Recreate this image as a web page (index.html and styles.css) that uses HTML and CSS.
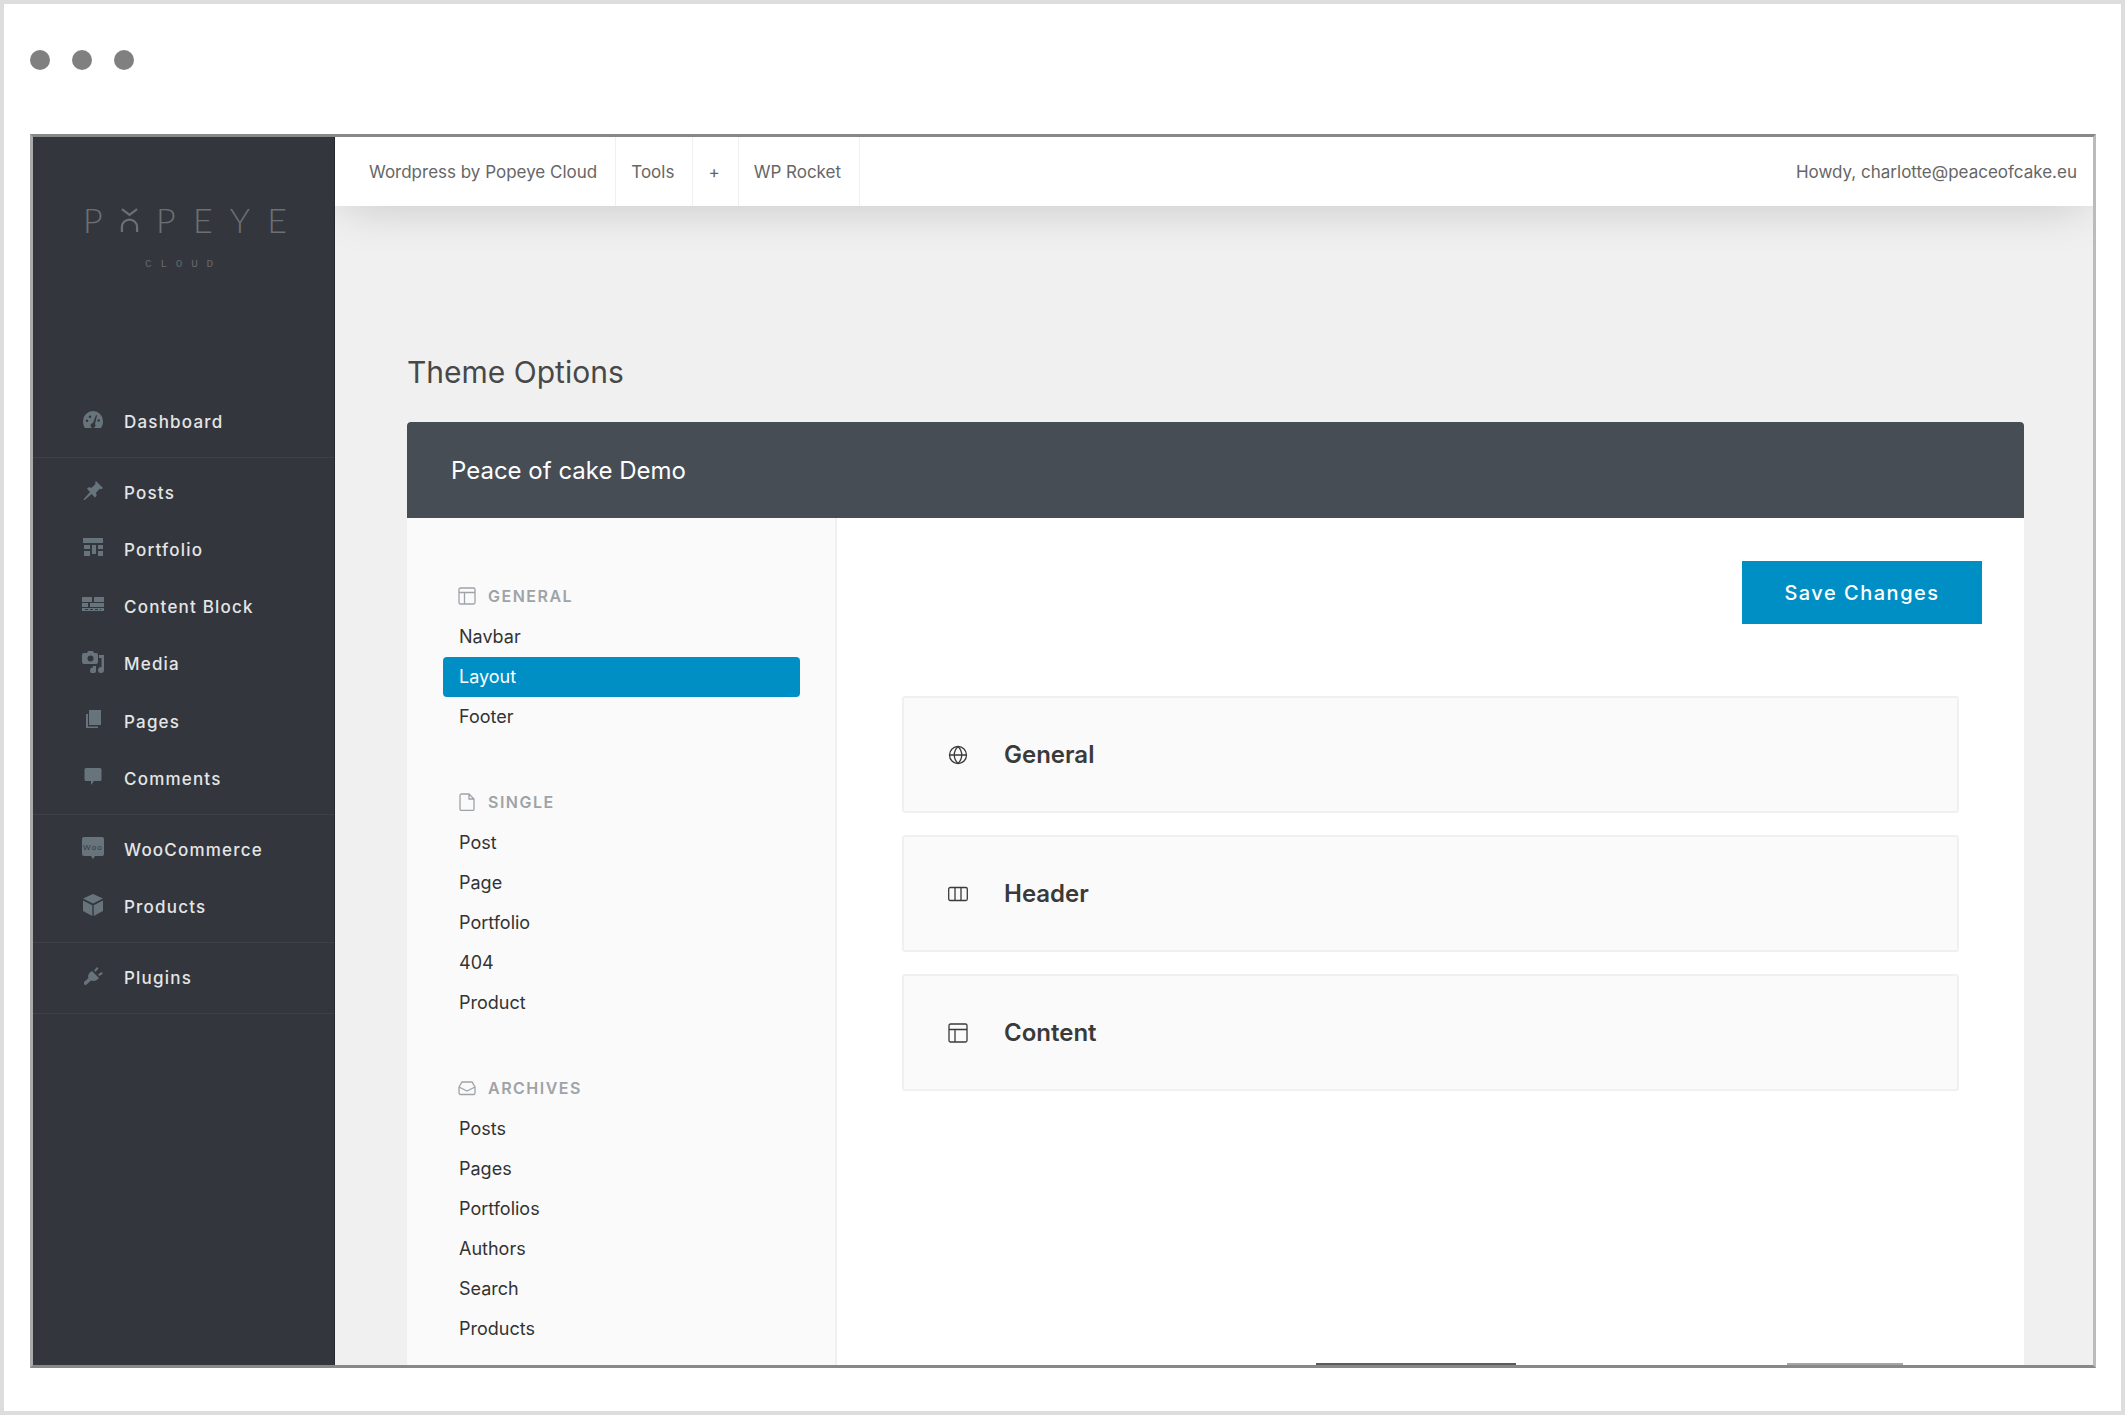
FILE: index.html
```html
<!DOCTYPE html>
<html lang="en">
<head>
    <meta charset="UTF-8">
    <meta name="viewport" content="width=device-width, initial-scale=1.0">
    <title>Theme Options</title>
    <link rel="stylesheet" href="styles.css">
</head>
<body>
<div class="page">
    <!-- Window dots -->
    <div class="dots"><span></span><span></span><span></span></div>

    <div class="frame">
        <!-- Sidebar -->
        <aside class="sidebar">
            <div class="logo">
                <div class="logo-name">
                    <span>P</span>
                    <svg class="logo-o" viewBox="0 0 20 26"><path d="M2 1l8 6 8-6M2 25v-5a8 8 0 0 1 16 0v5" fill="none" stroke="#6c6f73" stroke-width="2.4"/></svg>
                    <span>P</span><span>E</span><span>Y</span><span>E</span>
                </div>
                <div class="logo-sub">CLOUD</div>
            </div>

            <ul class="nav first">
                <li><svg class="nav-icon" viewBox="0 0 22 20"><path fill-rule="evenodd" d="M11 1a10 10 0 0 1 10 10c0 3-.8 5.400-2 7H3c-1.200-1.600-2-4-2-7A10 10 0 0 1 11 1zm3 4l-3 8a2.500 2.500 0 1 0 2 1l2-8.500zM5 9.500a1.300 1.300 0 1 0 0 2.600 1.300 1.300 0 0 0 0-2.600zm3-4a1.300 1.300 0 1 0 0 2.600 1.300 1.300 0 0 0 0-2.600zm10 5a1.300 1.300 0 1 0-2.600 0 1.300 1.300 0 0 0 2.600 0z"/></svg>Dashboard</li>
            </ul>
            <ul class="nav">
                <li><svg class="nav-icon" viewBox="0 0 22 20"><path d="M14 0l7 7-1.800 1.300-1.500-.5-3.700 3.900.6 3.100-1.600 1.600-3.400-3.500-6.600 5.800-1.500.6.500-1.600 6-6.600L5 7.700l1.600-1.500 3 .6 3.900-3.800-.4-1.500z"/></svg>Posts</li>
                <li><svg class="nav-icon" viewBox="0 0 22 20"><path d="M1 0h20v5H1zM2 7h6v4H2zM10 7h4v9h-4zM16 7h5v4h-5zM2 13h6v5H2zM16 13h5v5h-5z"/></svg>Portfolio</li>
                <li><svg class="nav-icon" viewBox="0 0 22 20"><path d="M0 2h10v5H0zM12 2h10v5H12zM0 8h6v4H0zM8 8h14v4H8zM0 13h22v3H0z"/><path d="M3 14.500h16" stroke="#33373d" stroke-width="1" stroke-dasharray="3 2"/></svg>Content Block</li>
                <li><svg class="nav-icon" viewBox="0 0 22 22"><path fill-rule="evenodd" d="M2 2h3l1-2h5l1 2h2a2 2 0 0 1 2 2v7a2 2 0 0 1-2 2H2a2 2 0 0 1-2-2V4a2 2 0 0 1 2-2zm6.500 2.500a3 3 0 1 0 0 6 3 3 0 0 0 0-6z"/><path d="M17 4h5v15a3 3 0 1 1-2.500-3V7H17zM11 15h3v4a3 3 0 1 1-3-2.500z"/></svg>Media</li>
                <li><svg class="nav-icon" viewBox="0 0 22 20"><path d="M7 0h12v15H7z"/><path d="M4 4h2v12.500h10V18H4z"/></svg>Pages</li>
                <li><svg class="nav-icon" viewBox="0 0 22 20"><path d="M4 1h14a1.500 1.500 0 0 1 1.500 1.500v10A1.500 1.500 0 0 1 18 14h-6l-3 4v-4H4a1.500 1.500 0 0 1-1.500-1.500v-10A1.500 1.500 0 0 1 4 1z"/></svg>Comments</li>
            </ul>
            <ul class="nav">
                <li><svg class="nav-icon" viewBox="0 0 22 22"><path d="M2 0h18a2 2 0 0 1 2 2v15a2 2 0 0 1-2 2h-7l-2 3-2-3H2a2 2 0 0 1-2-2V2a2 2 0 0 1 2-2z"/><text class="woo-text" x="11" y="12.500">Woo</text></svg>WooCommerce</li>
                <li><svg class="nav-icon" viewBox="0 0 22 22"><path d="M11 0l10 4.500-10 5-10-5zM1 6.500l9.300 4.700V22L1 17zM21 6.500v10.500l-9.300 5V11.200z"/></svg>Products</li>
            </ul>
            <ul class="nav">
                <li><svg class="nav-icon" viewBox="0 0 22 20"><path d="M10 5l7 7c-2 2.500-5 3.500-8 2.500L4 19l-2-.5L2 16l4.500-4C5.500 9.500 7 6.500 10 5zM12 4.500L15 1l1.500 1.500-3 3.300zM16 8.500L19.500 6 21 7.500 17.500 10z"/></svg>Plugins</li>
            </ul>
        </aside>

        <div class="main">
            <!-- Top bar -->
            <header class="topbar">
                <a class="top-link first">Wordpress by Popeye Cloud</a>
                <a class="top-link">Tools</a>
                <a class="top-link">+</a>
                <a class="top-link">WP Rocket</a>
                <span class="howdy">Howdy, charlotte@peaceofcake.eu</span>
            </header>

            <div class="content">
                <h1>Theme Options</h1>
                <section class="panel">
                    <div class="panel-head">Peace of cake Demo</div>
                    <div class="panel-body">
                        <!-- Left menu -->
                        <div class="menu">
                            <div class="menu-group">
                                <h3><svg class="group-icon" viewBox="0 0 18 18"><rect x="1" y="1" width="16" height="16" rx="1.500"/><path d="M1 5.500h16M6.500 5.500V17"/></svg>GENERAL</h3>
                                <a class="menu-item">Navbar</a>
                                <a class="menu-item active">Layout</a>
                                <a class="menu-item">Footer</a>
                            </div>
                            <div class="menu-group">
                                <h3><svg class="group-icon" viewBox="0 0 18 18"><path d="M3 1h8l5 5v10a1.500 1.500 0 0 1-1.500 1.500h-11.500A1.500 1.500 0 0 1 2 16V2.500A1.500 1.500 0 0 1 3 1zM11 1v5h5"/></svg>SINGLE</h3>
                                <a class="menu-item">Post</a>
                                <a class="menu-item">Page</a>
                                <a class="menu-item">Portfolio</a>
                                <a class="menu-item">404</a>
                                <a class="menu-item">Product</a>
                            </div>
                            <div class="menu-group">
                                <h3><svg class="group-icon" viewBox="0 0 18 18"><path d="M1 8l3-5h10l3 5v6a1.500 1.500 0 0 1-1.500 1.500h-13A1.500 1.500 0 0 1 1 14zM1 8l8 4 8-4"/></svg>ARCHIVES</h3>
                                <a class="menu-item">Posts</a>
                                <a class="menu-item">Pages</a>
                                <a class="menu-item">Portfolios</a>
                                <a class="menu-item">Authors</a>
                                <a class="menu-item">Search</a>
                                <a class="menu-item">Products</a>
                            </div>
                        </div>

                        <!-- Right side -->
                        <div class="options">
                            <div class="options-top"><button class="save">Save Changes</button></div>
                            <div class="card"><svg class="card-icon" viewBox="0 0 20 20"><circle cx="10" cy="10" r="8.500"/><path d="M1.500 10h17M10 1.500c-5 5-5 12 0 17M10 1.500c5 5 5 12 0 17"/></svg>General</div>
                            <div class="card"><svg class="card-icon" viewBox="0 0 20 20"><rect x="0.700" y="3.500" width="18.600" height="13" rx="1.500"/><path d="M7 3.500v13M13 3.500v13"/></svg>Header</div>
                            <div class="card"><svg class="card-icon" viewBox="0 0 20 20"><rect x="1" y="1" width="18" height="18" rx="1.500"/><path d="M1 6.500h18M7 6.500V19"/></svg>Content</div>
                            <!-- tops of the next row, cut off by the window -->
                            <span class="cut-off one"></span>
                            <span class="cut-off two"></span>
                        </div>
                    </div>
                </section>
            </div>
        </div>
    </div>
</div>
</body>
</html>
```

FILE: styles.css
```css
* {
    box-sizing: border-box;
}
body {
    margin: 0;
    font-family: "Inter", "Open Sans", sans-serif;
    color: #333;
}
h1, h3, ul {
    margin: 0;
    padding: 0;
}
.page {
    width: 2125px;
    height: 1415px;
    border: 4px solid #ddd;
    padding-left: 26px;
    background: #fff;
    overflow: hidden;
}
.dots {
    height: 130px;
    padding-top: 46px;
    display: flex;
    gap: 22px;
}
.dots span {
    width: 20px;
    height: 20px;
    border-radius: 50%;
    background: #808080;
}
.frame {
    width: 2066px;
    height: 1234px;
    display: flex;
    border-top: 3px solid #888;
    border-bottom: 3px solid #888;
    border-left: 3px solid #aaa;
    border-right: 3px solid #bbb;
    overflow: hidden;
}

/* Sidebar */
.sidebar {
    width: 302px;
    flex-shrink: 0;
    background: #33373d;
    border-right: 1px solid #25282c;
    position: relative;
    z-index: 2;
}
.logo {
    height: 256px;
    padding-top: 70px;
}
.logo-name {
    display: flex;
    justify-content: space-between;
    align-items: center;
    margin: 0 47px 0 50px;
    font-family: "Lato", sans-serif;
    font-weight: 300;
    font-size: 34px;
    line-height: 26px;
    color: #6c6f73;
}
.logo-o {
    width: 19px;
    height: 25px;
}
.logo-sub {
    margin-top: 26px;
    text-align: center;
    font-family: "Liberation Mono", monospace;
    font-size: 11px;
    line-height: 10px;
    letter-spacing: 8.800px;
    color: #64676b;
}
.nav {
    list-style: none;
    padding: 6.500px 0;
    border-bottom: 1px solid #3e4248;
}
.nav.first {
    padding-top: 0;
}
.nav li {
    height: 57.200px;
    display: flex;
    align-items: center;
    padding-left: 49px;
    font-size: 17px;
    font-weight: 500;
    letter-spacing: 1.200px;
    color: #e4e5e6;
}
.nav-icon {
    width: 22px;
    height: 22px;
    margin-right: 20px;
    fill: #68747b;
    position: relative;
    top: -2px;
}
.woo-text {
    fill: #33373d;
    font-family: "Liberation Sans", sans-serif;
    font-size: 8px;
    text-anchor: middle;
}

/* Top bar */
.main {
    flex: 1;
    min-width: 0;
    display: flex;
    flex-direction: column;
    background: #f0f0f0;
}
.topbar {
    height: 69px;
    flex-shrink: 0;
    display: flex;
    align-items: stretch;
    background: #fff;
    box-shadow: 0 6px 50px -8px rgba(0, 0, 0, 0.2);
    position: relative;
    z-index: 1;
    font-size: 17px;
    color: #666;
}
.top-link {
    display: flex;
    align-items: center;
    padding: 0 18px 0 15px;
    border-right: 1px solid #f0f0f0;
}
.top-link.first {
    padding-left: 34px;
}
.howdy {
    margin-left: auto;
    padding-right: 16px;
    align-self: center;
}

/* Content */
.content {
    flex: 1;
    min-height: 0;
    display: flex;
    flex-direction: column;
    padding: 146px 69px 0 72px;
}
h1 {
    height: 40px;
    margin-bottom: 30px;
    font-size: 30px;
    line-height: 40px;
    font-weight: 400;
    color: #484848;
}
.panel {
    flex: 1;
    min-height: 0;
    display: flex;
    flex-direction: column;
    background: #fff;
}
.panel-head {
    height: 96px;
    flex-shrink: 0;
    display: flex;
    align-items: center;
    padding-left: 44px;
    border-radius: 4px 4px 0 0;
    background: #474d55;
    color: #fff;
    font-size: 24px;
}
.panel-body {
    flex: 1;
    min-height: 0;
    display: flex;
}

/* Left menu */
.menu {
    width: 430px;
    flex-shrink: 0;
    padding: 57px 0 0 36px;
    background: #fafafa;
    border-right: 2px solid #f0f0f0;
}
.menu-group {
    width: 357px;
    margin-bottom: 44px;
}
.menu-group h3 {
    height: 42px;
    display: flex;
    align-items: center;
    padding-left: 15px;
    font-size: 16px;
    font-weight: 600;
    letter-spacing: 1.500px;
    color: #9ea3a8;
}
.group-icon {
    width: 18px;
    height: 18px;
    margin-right: 12px;
    fill: none;
    stroke: #9ea3a8;
    stroke-width: 1.300;
}
.menu-item {
    display: block;
    height: 40px;
    padding-left: 16px;
    font-size: 18px;
    line-height: 40px;
    color: #333;
}
.menu-item.active {
    border-radius: 4px;
    background: #008fc5;
    color: #fff;
}

/* Right side */
.options {
    flex: 1;
    min-width: 0;
    padding: 43px 42px 0 65px;
    position: relative;
}
.options-top {
    display: flex;
    justify-content: flex-end;
    margin-bottom: 72px;
}
.save {
    width: 240px;
    height: 63px;
    border: none;
    background: #008fc5;
    color: #fff;
    font-family: inherit;
    font-size: 20px;
    font-weight: 500;
    letter-spacing: 1.500px;
}
.card {
    width: 1057px;
    height: 117px;
    margin-bottom: 22px;
    display: flex;
    align-items: center;
    padding-left: 44px;
    border: 2px solid #f0f0f0;
    border-radius: 3px;
    background: #fafafa;
    font-size: 24px;
    font-weight: 600;
    color: #3a3a3a;
}
.card-icon {
    width: 20px;
    height: 20px;
    margin-right: 36px;
    fill: none;
    stroke: #3a3a3a;
    stroke-width: 1.300;
}
.cut-off {
    position: absolute;
    bottom: 0;
    height: 2px;
    background: #5a5a5a;
}
.cut-off.one {
    left: 479px;
    width: 200px;
}
.cut-off.two {
    left: 950px;
    width: 116px;
    background: #a5a5a5;
}
```
